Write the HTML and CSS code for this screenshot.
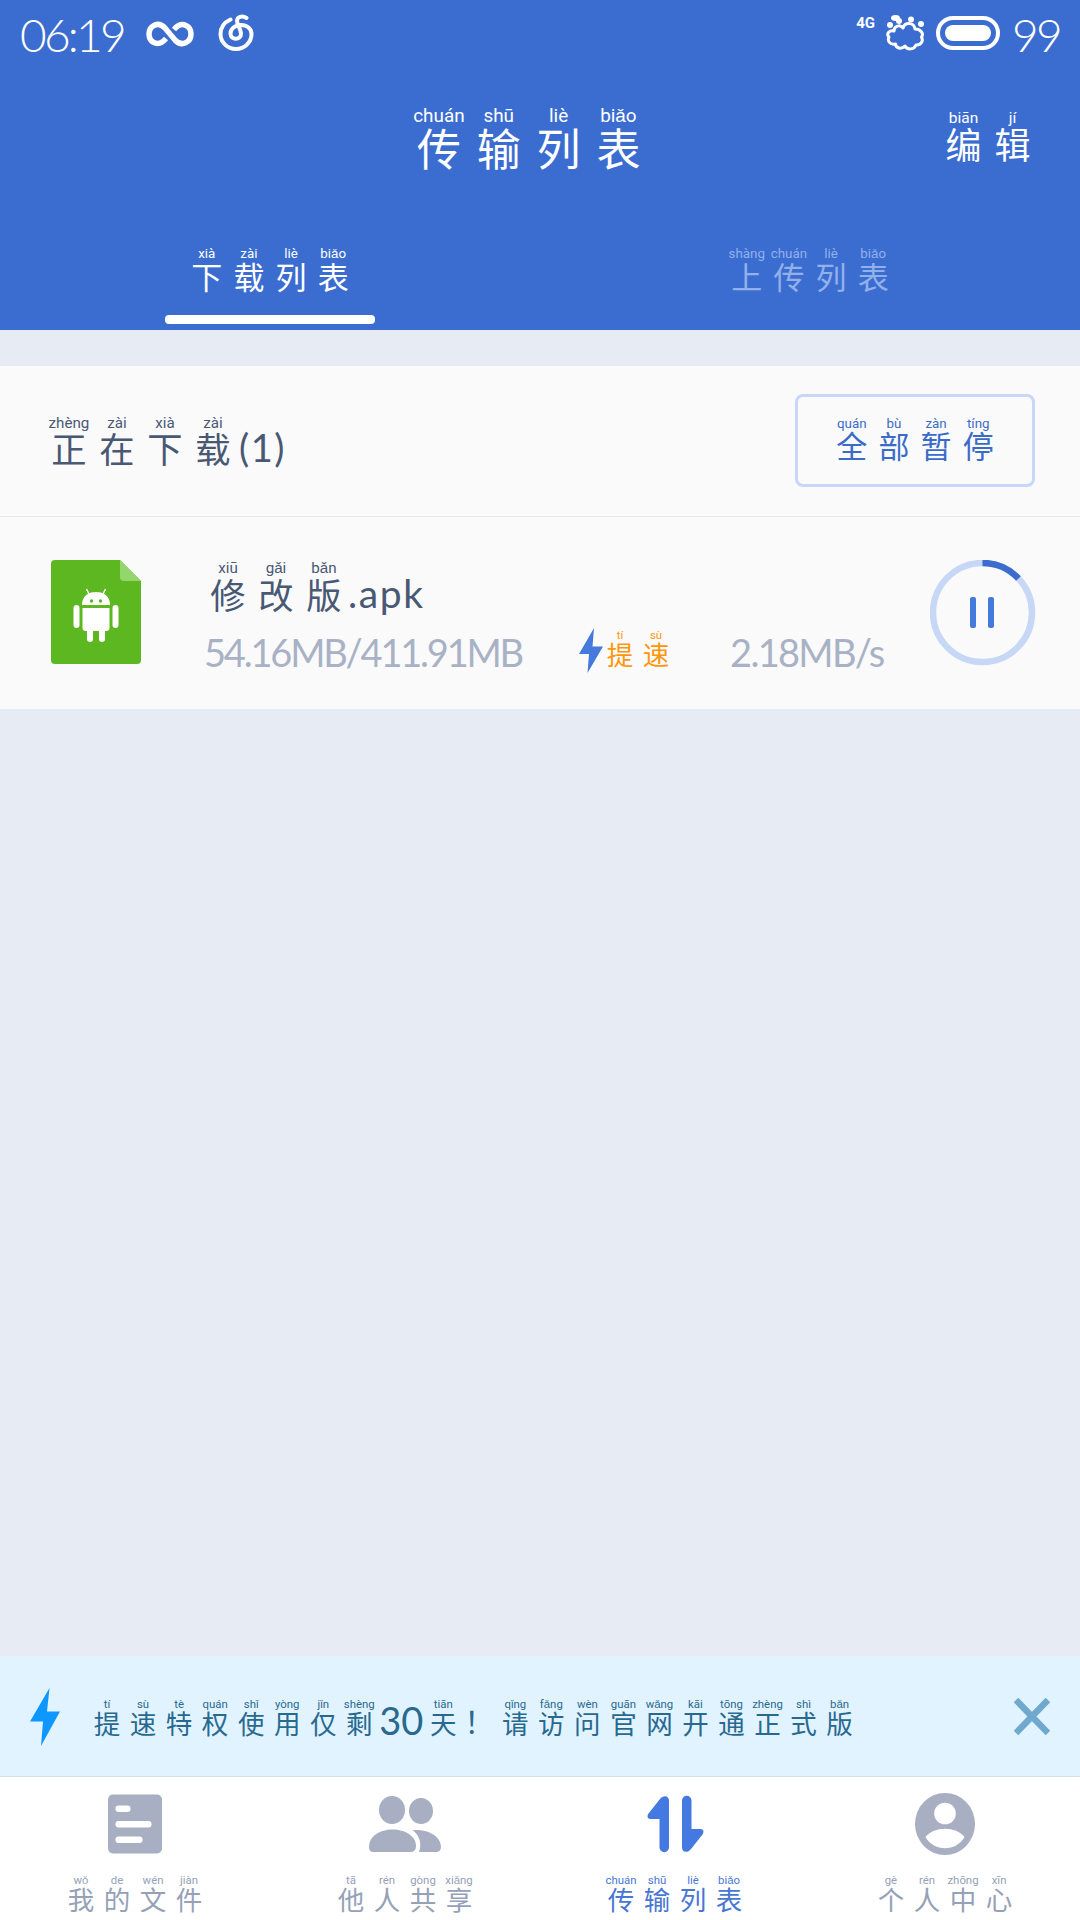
FILE: index.html
```html
<!DOCTYPE html>
<html lang="zh-CN">
  <head>
    <meta charset="UTF-8" />
    <meta name="viewport" content="width=device-width, initial-scale=1.0" />
    <title>传输列表</title>
    <link rel="stylesheet" href="styles.css">
  </head>
  <body>
    <!-- Header -->
    <header class="header">
      <div class="status-bar">
        <span class="time">06:19</span>
        <svg class="icon-infinity" width="48" height="26" viewBox="0 0 48 26">
          <path d="M20 17.500 C12 27 3 21 3 13 C3 5 12 -0.500 19 7 L29 19 C36 26.500 45 21 45 13 C45 5 36 -1 28 8.500" fill="none" stroke="#fff" stroke-width="5.500" />
        </svg>
        <svg class="icon-music" width="36" height="38" viewBox="0 0 36 38">
          <path d="M12.500 5.500 C6 8.500 2.500 14 2.500 20 A15.500 15 0 0 0 33.500 20 C33.500 14.500 29 11 23 11 C17 11 12.500 15 12.500 19.500 C12.500 26.500 23 26.500 23 19.500 C23 15 19 11 19 7 C19 3 24 1 28.500 4" fill="none" stroke="#fff" stroke-width="4" stroke-linecap="round" />
        </svg>
        <span class="network">4G</span>
        <svg class="icon-weather" width="40" height="38" viewBox="0 0 40 38">
          <path d="M9 17 C9 12 15 10 18 14 C20 8 29 8 30 15 C36 15 39 20 36.500 23 C39 28 35 31.500 31 31 C29 36 22 36 20 32 C16 36 11 34 10.500 30 C5 31 2 27 4 23 C1 20 4 16 9 17 Z" fill="none" stroke="#fff" stroke-width="3" stroke-linejoin="round" />
          <ellipse cx="10.500" cy="4" rx="4.500" ry="3" fill="#fff" />
          <circle cx="14" cy="7" r="3" fill="#fff" />
          <circle cx="26" cy="5.500" r="3" fill="#fff" />
          <circle cx="5" cy="11" r="3" fill="#fff" />
          <circle cx="36" cy="10" r="3" fill="#fff" />
        </svg>
        <span class="battery"><span class="battery-level"></span></span>
        <span class="battery-percent">99</span>
      </div>

      <div class="title-bar">
        <h1 class="title"><ruby>传<rt>chuán</rt></ruby><ruby>输<rt>shū</rt></ruby><ruby>列<rt>liè</rt></ruby><ruby>表<rt>biǎo</rt></ruby></h1>
        <span class="edit"><ruby>编<rt>biān</rt></ruby><ruby>辑<rt>jí</rt></ruby></span>
      </div>

      <div class="tabs">
        <div class="tab active"><span class="tab-label"><ruby>下<rt>xià</rt></ruby><ruby>载<rt>zài</rt></ruby><ruby>列<rt>liè</rt></ruby><ruby>表<rt>biǎo</rt></ruby></span></div>
        <div class="tab"><span class="tab-label"><ruby>上<rt>shàng</rt></ruby><ruby>传<rt>chuán</rt></ruby><ruby>列<rt>liè</rt></ruby><ruby>表<rt>biǎo</rt></ruby></span></div>
      </div>
    </header>

    <!-- Download list -->
    <main class="content">
      <div class="section-head">
        <h2 class="section-title"><ruby>正<rt>zhèng</rt></ruby><ruby>在<rt>zài</rt></ruby><ruby>下<rt>xià</rt></ruby><ruby>载<rt>zài</rt></ruby><span class="count">(1)</span></h2>
        <button class="pause-all"><ruby>全<rt>quán</rt></ruby><ruby>部<rt>bù</rt></ruby><ruby>暂<rt>zàn</rt></ruby><ruby>停<rt>tíng</rt></ruby></button>
      </div>

      <div class="task">
        <svg class="file-icon" width="90" height="104" viewBox="0 0 90 104">
          <path d="M4 0 H69 L90 21 V100 Q90 104 86 104 H4 Q0 104 0 100 V4 Q0 0 4 0 Z" fill="#5cb721" />
          <path d="M69 0 L90 21 H73 Q69 21 69 17 Z" fill="#93d66b" />
          <g fill="#fff">
            <path d="M31 45 C31 36 37 32 45 32 C53 32 59 36 59 45 Z" />
            <path d="M31.500 48 H58.500 V68 Q58.500 71 55.500 71 H34.500 Q31.500 71 31.500 68 Z" />
            <rect x="22.500" y="45" width="6" height="23" rx="3" />
            <rect x="61.500" y="45" width="6" height="23" rx="3" />
            <rect x="36" y="66" width="6" height="16" rx="3" />
            <rect x="48" y="66" width="6" height="16" rx="3" />
          </g>
          <path d="M35.500 29 L38 34 M54.500 29 L52 34" stroke="#fff" stroke-width="1.500" />
          <circle cx="40.500" cy="41" r="1.700" fill="#5cb721" />
          <circle cx="49.500" cy="41" r="1.700" fill="#5cb721" />
        </svg>
        <div class="task-info">
          <div class="task-name"><ruby>修<rt>xiū</rt></ruby><ruby>改<rt>gǎi</rt></ruby><ruby>版<rt>bǎn</rt></ruby><span class="ext">.apk</span></div>
          <div class="task-meta">
            <span class="size">54.16MB/411.91MB</span>
            <svg class="meta-bolt" width="24" height="45" viewBox="0 0 24 45">
              <path d="M15 0 L0 26 H10 L8.500 45 L24 18.500 H13.500 Z" fill="#4579dc" />
            </svg>
            <span class="boost"><ruby>提<rt>tí</rt></ruby><ruby>速<rt>sù</rt></ruby></span>
            <span class="speed">2.18MB/s</span>
          </div>
        </div>
        <svg class="progress" width="106" height="108" viewBox="0 0 106 108">
          <circle cx="52.500" cy="52.500" r="49.500" fill="none" stroke="#c7d7f6" stroke-width="6.500" />
          <path d="M52.500 3 A49.500 49.500 0 0 1 88.500 18.500" fill="none" stroke="#3c6dce" stroke-width="6.500" />
          <rect x="40" y="37" width="6" height="31" rx="2" fill="#4679dc" />
          <rect x="58" y="37" width="6" height="31" rx="2" fill="#4679dc" />
        </svg>
      </div>
    </main>

    <!-- Trial banner -->
    <div class="banner">
      <svg class="banner-bolt" width="30" height="58" viewBox="0 0 30 58">
        <path d="M19.500 0 L0 33.500 H13 L11 58 L30 23.500 H17 Z" fill="#0d97ff" />
      </svg>
      <p class="banner-text"><ruby>提<rt>tí</rt></ruby><ruby>速<rt>sù</rt></ruby><ruby>特<rt>tè</rt></ruby><ruby>权<rt>quán</rt></ruby><ruby>使<rt>shǐ</rt></ruby><ruby>用<rt>yòng</rt></ruby><ruby>仅<rt>jǐn</rt></ruby><ruby>剩<rt>shèng</rt></ruby><span class="days">30</span><ruby>天<rt>tiān</rt></ruby><span class="mark">！</span><ruby>请<rt>qǐng</rt></ruby><ruby>访<rt>fǎng</rt></ruby><ruby>问<rt>wèn</rt></ruby><ruby>官<rt>guān</rt></ruby><ruby>网<rt>wǎng</rt></ruby><ruby>开<rt>kāi</rt></ruby><ruby>通<rt>tōng</rt></ruby><ruby>正<rt>zhèng</rt></ruby><ruby>式<rt>shì</rt></ruby><ruby>版<rt>bǎn</rt></ruby></p>
      <svg class="close" width="36" height="37" viewBox="0 0 36 37">
        <path d="M2 2 L34 35 M34 2 L2 35" stroke="#6fa9cd" stroke-width="6.500" />
      </svg>
    </div>

    <!-- Bottom navigation -->
    <nav class="nav">
      <a class="nav-item">
        <svg width="74" height="64" viewBox="0 0 74 64">
          <rect x="10" y="2.500" width="54" height="59" rx="5" fill="#a8afc2" />
          <g fill="#fff">
            <rect x="17.500" y="13.500" width="15" height="6.500" rx="3" />
            <rect x="17.500" y="29" width="36" height="6.500" rx="3" />
            <rect x="17.500" y="44.500" width="27" height="6.500" rx="3" />
          </g>
        </svg>
        <span class="nav-label"><ruby>我<rt>wǒ</rt></ruby><ruby>的<rt>de</rt></ruby><ruby>文<rt>wén</rt></ruby><ruby>件<rt>jiàn</rt></ruby></span>
      </a>
      <a class="nav-item">
        <svg width="74" height="64" viewBox="0 0 74 64" fill="#a8afc2">
          <ellipse cx="24" cy="18" rx="13" ry="14" />
          <ellipse cx="53" cy="19" rx="12" ry="13" />
          <path d="M1 55 C1 44 12 37.500 24.500 37.500 C37 37.500 48 44 48 54 Q48 60 42 60 H5 Q1 60 1 55 Z" />
          <path d="M44.500 38 C62 37 73 45 73 55 Q73 60 68 60 H51 C54 52 52 44 44.500 38 Z" />
        </svg>
        <span class="nav-label"><ruby>他<rt>tā</rt></ruby><ruby>人<rt>rén</rt></ruby><ruby>共<rt>gòng</rt></ruby><ruby>享<rt>xiǎng</rt></ruby></span>
      </a>
      <a class="nav-item active">
        <svg width="74" height="64" viewBox="0 0 74 64" fill="#4579e2">
          <path d="M31 8.500 V55.500 A4.700 4.700 0 0 1 21.500 55.500 V27 H12.500 C9 27 9 23.500 10.500 21.500 L22 7 C25.500 2.500 31 3.500 31 8.500 Z" />
          <path d="M44 55.500 V8.500 A4.700 4.700 0 0 1 53.500 8.500 V37 H62.500 C66 37 66 40.500 64.500 42.500 L53 57 C49.500 61.500 44 60.500 44 55.500 Z" />
        </svg>
        <span class="nav-label"><ruby>传<rt>chuán</rt></ruby><ruby>输<rt>shū</rt></ruby><ruby>列<rt>liè</rt></ruby><ruby>表<rt>biǎo</rt></ruby></span>
      </a>
      <a class="nav-item">
        <svg width="74" height="64" viewBox="0 0 74 64">
          <ellipse cx="37" cy="32" rx="30" ry="31" fill="#a8afc2" />
          <circle cx="37" cy="21.500" r="10.800" fill="#fff" />
          <path d="M17.500 45 C26 34 48 34 56.500 45 C48 60 26 60 17.500 45 Z" fill="#fff" />
        </svg>
        <span class="nav-label"><ruby>个<rt>gè</rt></ruby><ruby>人<rt>rén</rt></ruby><ruby>中<rt>zhōng</rt></ruby><ruby>心<rt>xīn</rt></ruby></span>
      </a>
    </nav>
  </body>
</html>
```
FILE: styles.css
```css
* {
  box-sizing: border-box;
}

body {
  margin: 0;
  height: 1920px;
  display: flex;
  flex-direction: column;
  background-color: #e7ebf3;
  font-family: Lato, "Noto Sans CJK SC", sans-serif;
  overflow: hidden;
}

svg {
  display: block;
  flex-shrink: 0;
}

h1,
h2,
p {
  margin: 0;
  font-weight: normal;
}

/* Pinyin sits above each character */
ruby {
  display: inline-flex;
  flex-direction: column-reverse;
  align-items: center;
  width: 1.36em;
  line-height: 1.08;
  font-family: "Liberation Sans", "Noto Sans CJK SC", sans-serif;
}

rt {
  display: block;
  font-family: Roboto, sans-serif;
  font-size: 0.43em;
  line-height: 1.16;
  white-space: nowrap;
}

.title,
.edit,
.tab-label,
.section-title,
.pause-all,
.task-name,
.boost,
.banner-text,
.nav-label {
  display: flex;
  align-items: flex-end;
  line-height: 1;
}

/* Header */
.header {
  height: 330px;
  background-color: #3b6dd1;
  color: #fff;
}

.status-bar {
  display: flex;
  align-items: center;
  height: 66px;
  padding: 0 20px;
}

.time,
.battery-percent {
  font-size: 46px;
  font-weight: 300;
  letter-spacing: -2.8px;
  line-height: 66px;
  padding-top: 4px;
}

.time {
  width: 126px;
}

.icon-infinity {
  margin-top: 2px;
}

.icon-music {
  margin-left: 24px;
}

.network {
  align-self: flex-start;
  margin: 15px 10px 0 auto;
  font-family: Roboto, sans-serif;
  font-size: 15px;
  font-weight: 700;
  line-height: 16px;
}

.battery {
  width: 64px;
  height: 34px;
  margin: 0 12px 0 11px;
  padding: 5px;
  border: 4px solid #fff;
  border-radius: 17px;
}

.battery-level {
  display: block;
  height: 16px;
  border-radius: 8px;
  background-color: #fff;
}

.battery-percent {
  width: 48px;
}

.title-bar {
  display: flex;
  align-items: center;
  height: 144px;
  padding: 0 43px 0 409px;
}

.title {
  margin-top: 3px;
  font-size: 44px;
}

.edit {
  margin-left: auto;
  font-size: 36px;
}

.tabs {
  display: flex;
}

.tab {
  flex: 1;
  display: flex;
  flex-direction: column;
  align-items: center;
  padding-top: 37px;
  font-size: 31px;
  color: #92b0ea;
}

.tab-label {
  height: 48px;
}

.tab.active {
  color: #fff;
}

.tab.active::after {
  content: "";
  width: 210px;
  height: 9px;
  margin-top: 20px;
  border-radius: 4px;
  background-color: #fff;
}

/* Download list */
.content {
  flex: 1;
  padding-top: 36px;
}

.section-head {
  display: flex;
  align-items: center;
  justify-content: space-between;
  height: 150px;
  padding: 0 45px;
  background-color: #fafafb;
}

.section-title {
  margin-top: 3px;
  font-size: 35.3px;
  color: #495873;
}

.count {
  margin-left: 2px;
  padding-bottom: 4px;
  font-size: 38px;
  letter-spacing: 1.5px;
}

.pause-all {
  justify-content: center;
  align-items: center;
  width: 240px;
  height: 93px;
  margin-bottom: 2px;
  padding: 0;
  border: 3px solid #c8d7f5;
  border-radius: 8px;
  background: none;
  font-size: 31px;
  color: #3b6bc8;
}

.task {
  display: flex;
  height: 193px;
  padding: 43px 44px 0 51px;
  border-top: 1px solid #e8e9ec;
  background-color: #fafafb;
}

.task-info {
  flex: 1;
  padding-left: 63px;
}

.task-name {
  height: 56px;
  font-size: 35.3px;
  color: #495873;
}

.ext {
  padding-bottom: 3px;
  font-size: 39px;
  letter-spacing: 1.6px;
}

.task-meta {
  display: flex;
  align-items: center;
  height: 46px;
  margin-top: 11px;
  color: #a9b2c5;
}

.size,
.speed {
  font-size: 38px;
  line-height: 46px;
  padding-top: 4px;
}

.size {
  width: 375px;
  letter-spacing: -2.2px;
}

.boost {
  margin-left: -1px;
  font-size: 26.5px;
  color: #ff960a;
}

.speed {
  margin-left: 56px;
  letter-spacing: -1.7px;
}

.progress {
  margin-left: -1px;
}

/* Banner */
.banner {
  display: flex;
  align-items: center;
  height: 120px;
  padding: 1px 30px 0;
  background-color: #e1f3ff;
}

.banner-text {
  margin: 5px 0 0 29px;
  font-size: 26.5px;
  color: #28698f;
}

.days {
  width: 48px;
  padding-bottom: 4px;
  font-size: 38px;
  text-align: center;
  line-height: 32px;
}

.mark {
  width: 36px;
  padding-bottom: 4px;
  font-size: 30px;
  text-align: center;
}

.close {
  margin-left: auto;
}

/* Bottom navigation */
.nav {
  display: flex;
  height: 144px;
  border-top: 1px solid #d8dee6;
  background-color: #fff;
}

.nav-item {
  flex: 1;
  display: flex;
  flex-direction: column;
  align-items: center;
  padding-top: 15px;
  color: #95a1b7;
}

.nav-item.active {
  color: #4877d4;
}

.nav-label {
  margin-top: 18px;
  font-size: 26.5px;
}
```
